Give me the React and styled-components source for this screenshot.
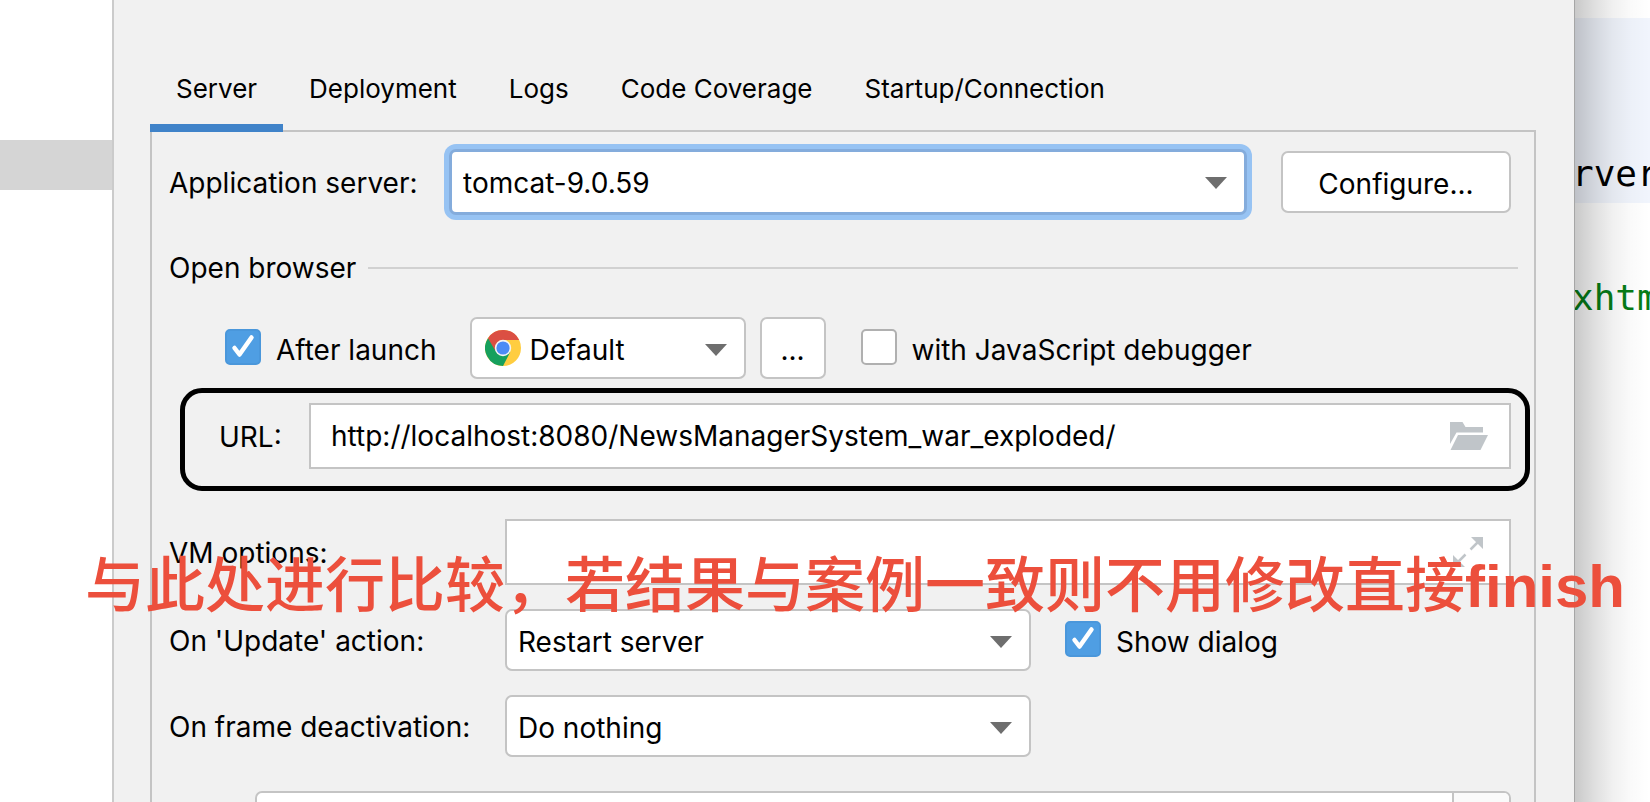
import { useState } from 'react';
import styled, { createGlobalStyle } from 'styled-components';

const GlobalStyle = createGlobalStyle`
  * {
    box-sizing: border-box;
  }

  body {
    margin: 0;
    background: #ffffff;
    color: #000000;
    font-family: Inter, 'Noto Sans', sans-serif;
    font-size: 28px;
    line-height: 32px;
  }

  input, select, button {
    font: inherit;
    color: inherit;
  }
`;

const Page = styled.div`
  position: relative;
  display: grid;
  grid-template-columns: 112px minmax(0, 1fr) 75px;
  height: 100vh;
  overflow: hidden;
`;

const Sidebar = styled.div`
  padding-top: 140px;
`;

const SelectedRow = styled.div`
  height: 50px;
  background: #d5d5d5;
`;

const Dialog = styled.main`
  padding: 60px 38px 0 36px;
  background: #f1f1f1;
  border-left: 2px solid #cbcbcb;
  border-right: 1px solid #a6a6a6;
`;

/* Editor visible behind the dialog, darkened by the dialog's shadow */
const Editor = styled.div`
  position: relative;
  overflow: hidden;
  padding-top: 18px;
  font-family: 'DejaVu Sans Mono', monospace;
  font-size: 36px;
  line-height: 44px;
  text-indent: -3px;
  white-space: nowrap;

  &::after {
    content: '';
    position: absolute;
    inset: 0;
    background: linear-gradient(
      to right,
      rgba(0, 0, 0, 0.21),
      rgba(0, 0, 0, 0.13) 25%,
      rgba(0, 0, 0, 0.06) 50%,
      rgba(0, 0, 0, 0.02) 75%,
      rgba(0, 0, 0, 0)
    );
    pointer-events: none;
  }
`;

const CodeBlock = styled.div`
  height: 185px;
  padding-top: 134px;
  background: #f1f5fd;
`;

const CodeString = styled.div`
  padding-top: 73px;
  color: #067d17;
`;

const Tabs = styled.div`
  display: flex;
  font-size: 26px;
`;

const Tab = styled.button`
  padding: 13px 26px 19px;
  border: 0;
  border-bottom: 8px solid ${props => (props.$active ? '#4083c9' : 'transparent')};
  background: none;
  position: relative;
`;

const Panel = styled.section`
  display: flex;
  flex-direction: column;
  margin-top: -2px;
  padding: 17px 23px 0 17px;
  border: 2px solid #c4c4c4;
  height: 760px;
`;

const Row = styled.div`
  display: flex;
  align-items: center;
  flex-shrink: 0;
  margin-top: ${props => props.$top || 0}px;
  padding-left: ${props => props.$indent || 0}px;
`;

const Label = styled.label`
  flex-shrink: 0;
  width: ${props => props.$width}px;
  padding-top: 2px;
`;

const ComboBox = styled.div`
  position: relative;
  display: flex;
  align-items: center;
  height: ${props => (props.$focused ? 66 : 62)}px;
  ${props => (props.$width ? `width: ${props.$width}px;` : 'flex: 1;')}
  border: ${props => (props.$focused ? '3px solid #84acdc' : '2px solid #c4c4c4')};
  border-radius: 7px;
  background: #ffffff;
  ${props => props.$focused && 'box-shadow: 0 0 0 5px #97c3f3;'}

  select {
    flex: 1;
    min-width: 0;
    height: 100%;
    padding: ${props => (props.$focused ? '2px' : '4px')} 60px 0 11px;
    border: 0;
    outline: 0;
    background: none;
    appearance: none;
  }
`;

const Arrow = styled.svg`
  position: absolute;
  top: 25px;
  right: 17px;
  width: 22px;
  height: 12px;
  pointer-events: none;
`;

const ChromeLogo = styled.svg`
  flex-shrink: 0;
  width: 36px;
  height: 36px;
  margin-left: 13px;
  margin-right: -2px;
`;

const Button = styled.button`
  width: ${props => props.$width}px;
  height: 62px;
  margin-left: ${props => props.$gap}px;
  padding: 4px 0 0;
  border: 2px solid #c4c4c4;
  border-radius: 7px;
  background: #ffffff;
`;

const SectionTitle = styled.h2`
  display: flex;
  align-items: center;
  gap: 12px;
  flex-shrink: 0;
  margin: 37px -7px 0 0;
  font-size: inherit;
  font-weight: 400;

  &::after {
    content: '';
    flex: 1;
    height: 2px;
    background: #d1d1d1;
  }
`;

const CheckLabel = styled.label`
  display: flex;
  align-items: center;
  gap: 15px;
  margin-left: ${props => props.$gap || 0}px;
  margin-right: ${props => props.$after || 0}px;
  padding-top: 3px;
`;

const CheckBox = styled.span`
  position: relative;
  display: block;
  width: 36px;
  height: 36px;
  margin-bottom: 6px;

  input {
    display: block;
    width: 36px;
    height: 36px;
    margin: 0;
    border: 2px solid #b0b0b0;
    border-radius: 5px;
    background: #ffffff;
    appearance: none;
  }

  input:checked {
    border-color: #4a97db;
    background: #4f9ee3;
  }

  svg {
    position: absolute;
    inset: 0;
    pointer-events: none;
  }
`;

const Highlight = styled.div`
  display: flex;
  align-items: center;
  flex-shrink: 0;
  margin: 9px -19px 0 11px;
  padding: 10px 14px 17px 34px;
  border: 5px solid #000000;
  border-radius: 22px;
`;

const Field = styled.div`
  display: flex;
  align-items: center;
  flex: 1;
  height: 66px;
  padding-right: ${props => props.$end}px;
  border: 2px solid #c4c4c4;
  background: #ffffff;

  input {
    flex: 1;
    min-width: 0;
    height: 100%;
    padding: 0 20px;
    border: 0;
    outline: 0;
    background: none;
  }

  svg {
    flex-shrink: 0;
  }
`;

const TaskList = styled.div`
  display: flex;
  justify-content: flex-end;
  flex-shrink: 0;
  height: 90px;
  margin: 34px 0 0 86px;
  border: 2px solid #c4c4c4;
  border-radius: 7px;
  background: #ffffff;
`;

const TaskToolbar = styled.div`
  width: 57px;
  border-left: 2px solid #c4c4c4;
  border-top-right-radius: 5px;
  background: #fafafa;
`;

const Note = styled.p`
  position: absolute;
  top: 545px;
  left: 85px;
  margin: 0;
  color: #ec4f3c;
  font-family: 'Noto Sans CJK SC', sans-serif;
  font-size: 60px;
  font-weight: 500;
  line-height: 72px;
  white-space: nowrap;
  pointer-events: none;

  b {
    font-family: 'Liberation Sans', sans-serif;
    font-weight: 700;
  }
`;

const TABS = ['Server', 'Deployment', 'Logs', 'Code Coverage', 'Startup/Connection'];

const Combo = ({ id, label, options, width, focused, children }) => (
  <ComboBox $width={width} $focused={focused}>
    {children}
    <select id={id} aria-label={label}>
      {options.map(option => <option key={option}>{option}</option>)}
    </select>
    <Arrow viewBox="0 0 22 12" aria-hidden="true">
      <path d="M0 0h22L11 12z" fill="#6e6e6e" />
    </Arrow>
  </ComboBox>
);

const Check = ({ text, initial = false, gap, after }) => {
  const [checked, setChecked] = useState(initial);

  return (
    <CheckLabel $gap={gap} $after={after}>
      <CheckBox>
        <input type="checkbox" checked={checked} onChange={e => setChecked(e.target.checked)} />
        {checked && (
          <svg viewBox="0 0 36 36" aria-hidden="true">
            <path
              d="M9.500 19l5 6.500L26.500 8.500"
              fill="none"
              stroke="#ffffff"
              strokeWidth="4.500"
              strokeLinecap="round"
              strokeLinejoin="round"
            />
          </svg>
        )}
      </CheckBox>
      {text}
    </CheckLabel>
  );
};

const Chrome = () => (
  <ChromeLogo viewBox="0 0 36 36" aria-hidden="true">
    <circle cx="18" cy="18" r="18" fill="#ffcd40" />
    <path d="M18 18L3 8.2A18 18 0 0 0 18 36L25.2 22z" fill="#16a05d" />
    <path d="M3 8.2A18 18 0 0 1 34.2 10H18l-7.5 11z" fill="#db4f43" />
    <circle cx="18" cy="18" r="8.2" fill="#f4f4f4" />
    <circle cx="18" cy="18" r="6.6" fill="#4c8bf5" />
  </ChromeLogo>
);

const App = () => {
  const [activeTab, setActiveTab] = useState('Server');
  const [url, setUrl] = useState('http://localhost:8080/NewsManagerSystem_war_exploded/');
  const [vmOptions, setVmOptions] = useState('');

  return (
    <>
      <GlobalStyle />
      <Page>
        <Sidebar>
          <SelectedRow />
        </Sidebar>

        <Dialog>
          <Tabs role="tablist">
            {TABS.map(tab => (
              <Tab
                key={tab}
                type="button"
                role="tab"
                aria-selected={tab === activeTab}
                $active={tab === activeTab}
                onClick={() => setActiveTab(tab)}
              >
                {tab}
              </Tab>
            ))}
          </Tabs>

          <Panel>
            <Row>
              <Label htmlFor="server" $width={280}>Application server:</Label>
              <Combo id="server" options={['tomcat-9.0.59']} focused />
              <Button type="button" $width={230} $gap={34}>Configure...</Button>
            </Row>

            <SectionTitle>Open browser</SectionTitle>

            <Row $top={33} $indent={56}>
              <Check text="After launch" initial after={33} />
              <Combo label="Browser" options={['Default']} width={276}>
                <Chrome />
              </Combo>
              <Button type="button" $width={66} $gap={14}>...</Button>
              <Check text="with JavaScript debugger" gap={35} />
            </Row>

            <Highlight>
              <Label htmlFor="url" $width={90}>URL:</Label>
              <Field $end={21}>
                <input id="url" type="text" value={url} onChange={e => setUrl(e.target.value)} />
                <svg width="38" height="28" viewBox="0 0 38 28" aria-hidden="true">
                  <path d="M0 0h12.5l3 5H33v5.500H6.500L0 22z" fill="#c0c5c9" />
                  <path d="M8 13h30l-7.500 15H0.500z" fill="#c0c5c9" />
                </svg>
              </Field>
            </Highlight>

            <Row $top={28}>
              <Label htmlFor="vm" $width={336}>VM options:</Label>
              <Field $end={26}>
                <input id="vm" type="text" value={vmOptions} onChange={e => setVmOptions(e.target.value)} />
                <svg width="30" height="30" viewBox="0 0 30 30" aria-hidden="true">
                  <path d="M18 0h12v12z M0 18v12h12z" fill="#c0c5c9" />
                  <path d="M25 5l-7.500 7.500M5 25l7.500-7.500" stroke="#c0c5c9" strokeWidth="2.500" />
                </svg>
              </Field>
            </Row>

            <Row $top={24}>
              <Label htmlFor="update" $width={336}>On 'Update' action:</Label>
              <Combo id="update" options={['Restart server']} width={526} />
              <Check text="Show dialog" initial gap={34} />
            </Row>

            <Row $top={24}>
              <Label htmlFor="frame" $width={336}>On frame deactivation:</Label>
              <Combo id="frame" options={['Do nothing']} width={526} />
            </Row>

            <TaskList>
              <TaskToolbar />
            </TaskList>
          </Panel>
        </Dialog>

        <Editor>
          <CodeBlock>rver</CodeBlock>
          <CodeString>xhtml</CodeString>
        </Editor>

        <Note>与此处进行比较，若结果与案例一致则不用修改直接<b>finish</b></Note>
      </Page>
    </>
  );
};

export default App;
